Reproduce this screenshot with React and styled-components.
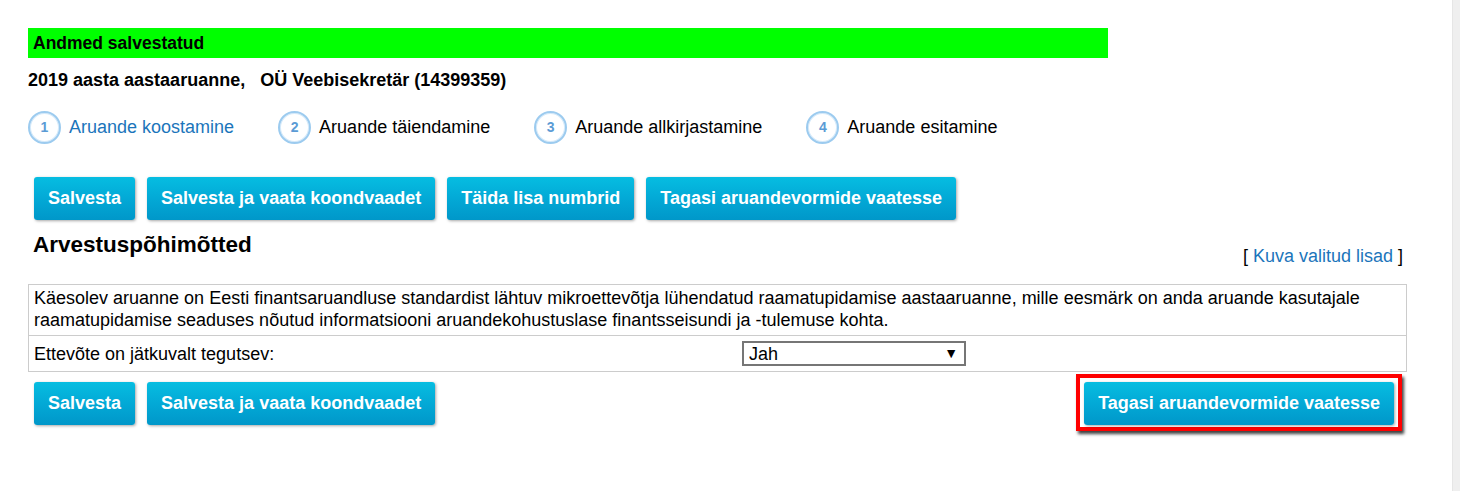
import React, { useState } from 'react'
import styled, { createGlobalStyle } from 'styled-components'

const GlobalStyle = createGlobalStyle`
  html, body {
    margin: 0;
    padding: 0;
    background: #fff;
  }
  body {
    font-family: 'Liberation Sans', Arial, sans-serif;
    color: #000;
  }
`

const Page = styled.div`
  display: flex;
  min-height: 100vh;
`

const Main = styled.div`
  flex: 1;
  padding: 28px 0 0 28px;
`

const Gutter = styled.div`
  width: 7px;
  background: #efefef;
  border-left: 1px solid #e6e6e6;
`

const Content = styled.div`
  width: 1379px;
`

const Notice = styled.div`
  width: 1080px;
  height: 30px;
  line-height: 30px;
  padding-left: 5px;
  box-sizing: border-box;
  background: #00ff00;
  font-size: 17.5px;
  font-weight: bold;
`

const ReportTitle = styled.div`
  margin-top: 11px;
  font-size: 18px;
  line-height: 22px;
  font-weight: bold;
  white-space: pre;
`

const Steps = styled.div`
  display: flex;
  align-items: center;
  margin-top: 19px;
  height: 34px;
`

const Step = styled.div`
  display: flex;
  align-items: center;
  gap: 8px;
  margin-right: 44px;
  font-size: 18px;
  color: ${(p) => (p.$active ? '#1b75bb' : '#000')};
`

const StepNum = styled.span`
  width: 29px;
  height: 29px;
  border-radius: 50%;
  border: 2px solid #9ccbef;
  box-shadow: inset 0 0 0 1px #d6eafa;
  display: flex;
  align-items: center;
  justify-content: center;
  font-size: 14px;
  font-weight: bold;
  color: #5b9bd5;
`

const ButtonRow = styled.div`
  display: flex;
  gap: 12px;
  margin-top: ${(p) => p.$top || 0}px;
  padding-left: 6px;
`

const Button = styled.button`
  height: 43px;
  padding: 0 14px;
  border: none;
  border-radius: 3px;
  background: linear-gradient(to bottom, #06bde1 0%, #03a9d6 50%, #0097c9 100%);
  box-shadow: 1px 1px 3px rgba(0, 0, 0, 0.35);
  color: #fff;
  font-family: 'Liberation Sans', Arial, sans-serif;
  font-size: 18px;
  font-weight: bold;
  cursor: pointer;
  white-space: nowrap;
`

const HeadingRow = styled.div`
  display: flex;
  justify-content: space-between;
  align-items: flex-start;
  margin-top: 12px;
`

const Heading = styled.h2`
  margin: 0 0 0 5px;
  font-size: 22.5px;
  line-height: 26px;
  font-weight: bold;
`

const LinkWrap = styled.div`
  margin: 13px 4px 0 0;
  font-size: 18px;
  line-height: 22px;
`

const Link = styled.a`
  color: #1b75bb;
  text-decoration: none;
`

const Table = styled.div`
  margin-top: 17px;
  border: 1px solid #cccccc;
  font-size: 18px;
  line-height: 22px;
`

const TextRow = styled.div`
  padding: 2px 5px 4px 5px;
  border-bottom: 1px solid #cccccc;
`

const FieldRow = styled.div`
  display: grid;
  grid-template-columns: 713px 1fr;
  align-items: center;
  padding: 5px 0;
`

const FieldLabel = styled.div`
  padding-left: 5px;
  align-self: start;
  margin-top: 2px;
`

const SelectWrap = styled.div`
  position: relative;
  width: 224px;
  height: 25px;
`

const Select = styled.select`
  appearance: none;
  width: 100%;
  height: 100%;
  box-sizing: border-box;
  border: 2px solid #767676;
  border-radius: 0;
  background: #fff;
  padding: 0 0 0 5px;
  font-family: 'Liberation Sans', Arial, sans-serif;
  font-size: 18px;
  color: #000;
`

const Arrow = styled.span`
  position: absolute;
  right: 8px;
  top: 5px;
  font-size: 14px;
  line-height: 15px;
  pointer-events: none;
`

const BottomRow = styled.div`
  display: flex;
  justify-content: space-between;
  align-items: flex-start;
`

const Highlight = styled.div`
  margin: 2px 5px 0 0;
  padding: 4px 4px 2px 4px;
  border: 4px solid #ff0000;
  box-shadow: 2px 3px 3px rgba(0, 0, 0, 0.75);
  display: flex;
`

const steps = [
  { n: 1, label: 'Aruande koostamine', active: true },
  { n: 2, label: 'Aruande täiendamine' },
  { n: 3, label: 'Aruande allkirjastamine' },
  { n: 4, label: 'Aruande esitamine' },
]

const App = () => {
  const [value, setValue] = useState('Jah')

  return (
    <Page>
      <GlobalStyle />
      <Main>
        <Content>
          <Notice>Andmed salvestatud</Notice>
          <ReportTitle>{'2019 aasta aastaaruanne,   OÜ Veebisekretär (14399359)'}</ReportTitle>

          <Steps>
            {steps.map((s) => (
              <Step key={s.n} $active={s.active}>
                <StepNum>{s.n}</StepNum>
                {s.label}
              </Step>
            ))}
          </Steps>

          <ButtonRow $top={33}>
            <Button>Salvesta</Button>
            <Button>Salvesta ja vaata koondvaadet</Button>
            <Button>Täida lisa numbrid</Button>
            <Button>Tagasi aruandevormide vaatesse</Button>
          </ButtonRow>

          <HeadingRow>
            <Heading>Arvestuspõhimõtted</Heading>
            <LinkWrap>
              [ <Link href="#">Kuva valitud lisad</Link> ]
            </LinkWrap>
          </HeadingRow>

          <Table>
            <TextRow>
              Käesolev aruanne on Eesti finantsaruandluse standardist lähtuv mikroettevõtja lühendatud
              raamatupidamise aastaaruanne, mille eesmärk on anda aruande kasutajale raamatupidamise seaduses
              nõutud informatsiooni aruandekohustuslase finantsseisundi ja -tulemuse kohta.
            </TextRow>
            <FieldRow>
              <FieldLabel>Ettevõte on jätkuvalt tegutsev:</FieldLabel>
              <SelectWrap>
                <Select value={value} onChange={(e) => setValue(e.target.value)}>
                  <option>Jah</option>
                  <option>Ei</option>
                </Select>
                <Arrow>▼</Arrow>
              </SelectWrap>
            </FieldRow>
          </Table>

          <BottomRow>
            <ButtonRow $top={10}>
              <Button>Salvesta</Button>
              <Button>Salvesta ja vaata koondvaadet</Button>
            </ButtonRow>
            <Highlight>
              <Button>Tagasi aruandevormide vaatesse</Button>
            </Highlight>
          </BottomRow>
        </Content>
      </Main>
      <Gutter />
    </Page>
  )
}

export default App
